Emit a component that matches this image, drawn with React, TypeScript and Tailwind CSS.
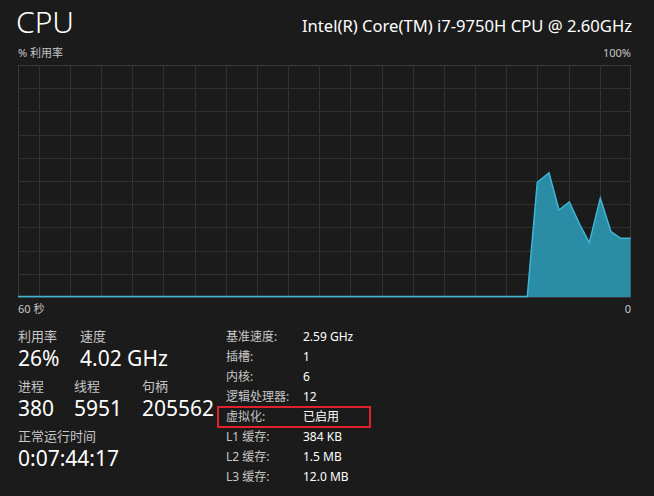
import React from "react";

const VX = [21, 52, 83, 114, 145, 177, 208, 239, 270, 301, 332, 364, 395, 426, 457, 488, 519, 551, 582];
const HY = [23.2, 46.4, 69.6, 92.8, 116, 139.2, 162.4, 185.6, 208.8];
const PTS: [number, number][] = [
  [0, 231.5],
  [509.3, 231.5],
  [519.3, 117.3],
  [531, 107.7],
  [541, 145],
  [551.3, 137],
  [562, 160],
  [571.3, 177.7],
  [582.3, 133.3],
  [593, 166.7],
  [602.7, 173.3],
  [612.5, 173.3],
];

function Chart() {
  const line = PTS.map((p) => p.join(",")).join(" ");
  const area = `${line} 612.5,232 0,232`;
  return (
    <svg width={613} height={233} viewBox="0 0 613 233" className="block">
      <rect x={0.5} y={0.5} width={612} height={232} fill="none" stroke="#3a3a3a" strokeWidth={1} />
      {VX.map((x) => (
        <line key={"v" + x} x1={x + 0.5} y1={0} x2={x + 0.5} y2={232} stroke="#313131" strokeWidth={1} />
      ))}
      {HY.map((y) => (
        <line key={"h" + y} x1={0} y1={Math.round(y) + 0.5} x2={613} y2={Math.round(y) + 0.5} stroke="#313131" strokeWidth={1} />
      ))}
      <polygon points={area} fill="#2a8ca5" />
      <polyline points={line} fill="none" stroke="#3db6d6" strokeWidth={1.5} strokeLinejoin="miter" />
    </svg>
  );
}

const font = { fontFamily: '"Noto Sans", "Noto Sans CJK SC", sans-serif' };

function Stat({ label, value, className = "" }: { label: string; value: string; className?: string }) {
  return (
    <div className={"flex flex-col " + className}>
      <span className="text-[13px] leading-[18px] text-[#c6c6c6]">{label}</span>
      <span className="text-[21px] leading-[26px] text-white">{value}</span>
    </div>
  );
}

const INFO: [string, string][] = [
  ["基准速度:", "2.59 GHz"],
  ["插槽:", "1"],
  ["内核:", "6"],
  ["逻辑处理器:", "12"],
  ["虚拟化:", "已启用"],
  ["L1 缓存:", "384 KB"],
  ["L2 缓存:", "1.5 MB"],
  ["L3 缓存:", "12.0 MB"],
];

export default function App() {
  return (
    <div className="w-[654px] h-[496px] bg-[#1b1b1b] text-white overflow-hidden" style={font}>
      <div className="flex items-end justify-between pl-[16px] pr-[22px] pt-[2px]">
        <span className="text-[30px] leading-[40px] font-light text-white">CPU</span>
        <span className="text-[16.6px] leading-[24px] mb-[4px] text-white">Intel(R) Core(TM) i7-9750H CPU @ 2.60GHz</span>
      </div>
      <div className="flex justify-between pl-[18px] pr-[23px] mt-[3px] text-[11px] leading-[16px] text-[#c6c6c6]">
        <span>% 利用率</span>
        <span>100%</span>
      </div>
      <div className="pl-[18px] mt-[4px]">
        <Chart />
      </div>
      <div className="flex justify-between pl-[18px] pr-[23px] mt-[3px] text-[11px] leading-[16px] text-[#c6c6c6]">
        <span>60 秒</span>
        <span>0</span>
      </div>
      <div className="flex pl-[18px] mt-[10px]">
        <div className="w-[208px] flex flex-col">
          <div className="flex">
            <Stat label="利用率" value="26%" className="w-[62px]" />
            <Stat label="速度" value="4.02 GHz" />
          </div>
          <div className="flex mt-[6px]">
            <Stat label="进程" value="380" className="w-[56px]" />
            <Stat label="线程" value="5951" className="w-[68px]" />
            <Stat label="句柄" value="205562" />
          </div>
          <div className="flex mt-[6px]">
            <Stat label="正常运行时间" value="0:07:44:17" />
          </div>
        </div>
        <div className="flex flex-col">
          {INFO.map(([k, v], i) => (
            <div
              key={k}
              className={
                "flex items-center h-[20px] text-[12px] " +
                (i === 4 ? "border-2 border-[#e0222c] -ml-[9px] pl-[7px] w-[154px] h-[22px] -my-[1px]" : "")
              }
            >
              <span className="w-[77px] text-[#c6c6c6]">{k}</span>
              <span className="text-white">{v}</span>
            </div>
          ))}
        </div>
      </div>
    </div>
  );
}
